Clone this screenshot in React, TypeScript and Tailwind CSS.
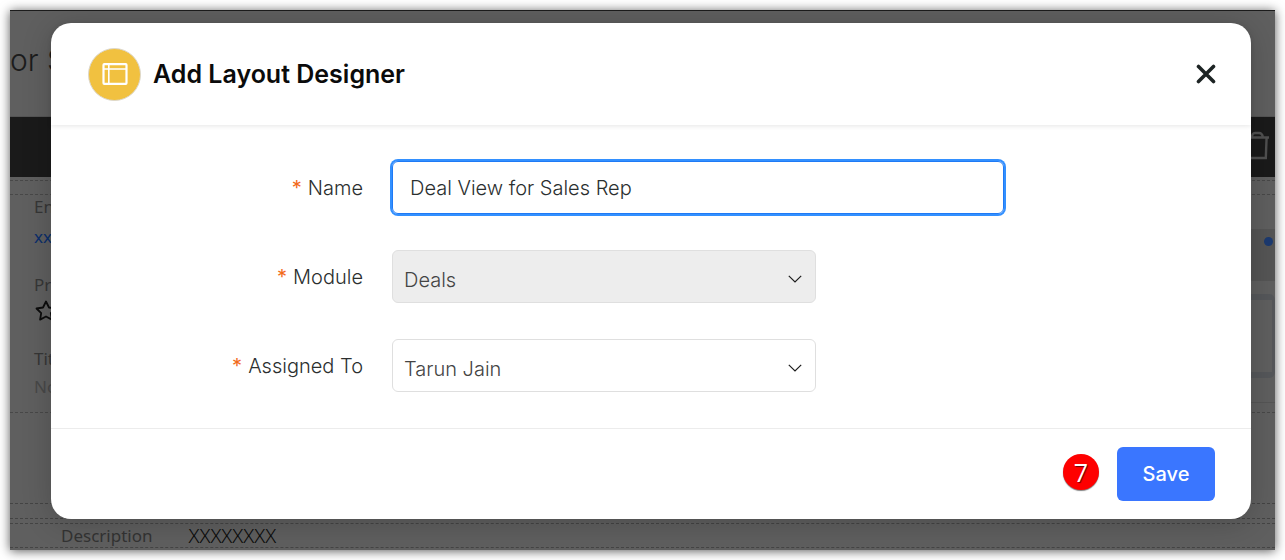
import React from 'react';

const assignees = ['Tarun Jain'];
const modules = ['Deals'];

const Chevron = () => (
  <svg
    viewBox="0 0 14 8"
    className="pointer-events-none col-start-1 row-start-1 mt-1 mr-[14px] h-2 w-[14px] self-center justify-self-end"
    fill="none"
    stroke="#1c1c1c"
    strokeWidth="1.2"
    aria-hidden="true"
  >
    <path d="M0.8 0.8 7 7 13.2 0.8" />
  </svg>
);

const FieldLabel = ({ htmlFor, children }: { htmlFor: string; children: React.ReactNode }) => (
  <label htmlFor={htmlFor} className="text-right text-[20px] leading-6 font-light text-[#2b2f2f]">
    <span className="mr-1.5 font-normal text-[#f26a1b]">*</span>
    {children}
  </label>
);

const SelectField = ({
  id,
  options,
  disabled,
}: {
  id: string;
  options: string[];
  disabled?: boolean;
}) => (
  <div className="grid w-full max-w-[424px]">
    <select
      id={id}
      disabled={disabled}
      className="col-start-1 row-start-1 h-[53px] w-full appearance-none rounded-md border border-[#dfdfdf] bg-white pt-1.5 pr-10 pl-[11px] text-[20px] font-light text-[#444] disabled:bg-[#ededed] disabled:opacity-100"
    >
      {options.map((option) => (
        <option key={option}>{option}</option>
      ))}
    </select>
    <Chevron />
  </div>
);

// Record page dimmed behind the dialog
const RecordPage = () => (
  <div
    aria-hidden="true"
    className="col-start-1 row-start-1 flex min-w-0 flex-col overflow-hidden border-t border-[#1c1c1c] bg-[#5f5f5f] font-['Noto_Sans','Open_Sans',sans-serif] text-[17px] leading-6"
  >
    <div className="flex h-[106px] items-center border-b border-[#545454] pb-2 font-['Inter',sans-serif] text-[30px] font-light text-[#1c1c1c]">
      or S
    </div>
    <div className="flex h-[60px] items-center justify-end bg-[#1a1a1a] pr-1.5 pb-1">
      <svg viewBox="0 0 26 30" className="h-[30px] w-[26px]" fill="none" stroke="#505050" strokeWidth="2.4">
        <path d="M0 7.500h26M3 7.500l.8 20.500h19L23.600 7.500M9 7.500c0-3 1-4.500 3-4.500h4c2 0 3.500 1.500 4 4.500" />
      </svg>
    </div>
    <div className="mt-[3px] h-[14px] border-t border-dashed border-[#484848]" />
    <div className="flex h-[219px] justify-between border-y border-dashed border-[#484848]">
      <div className="flex flex-col pl-6 text-[#363636]">
        <span>En</span>
        <span className="mt-1.5 text-[#0b2e6b]">xx</span>
        <span className="mt-6">Pr</span>
        <svg viewBox="0 0 24 24" className="mt-0.5 h-6 w-6" fill="none" stroke="#0c0c0c" strokeWidth="1.800" strokeLinejoin="round">
          <path d="m12 2.500 3 6 6.500 1-4.700 4.600 1.100 6.500L12 17.500l-5.900 3.100 1.100-6.500L2.500 9.500l6.500-1z" />
        </svg>
        <span className="mt-6">Tit</span>
        <span className="mt-1 text-[#484848]">No</span>
      </div>
      <div className="flex w-[100px] flex-col pt-[34px]">
        <div className="flex h-[52px] items-start justify-end bg-[#555] pt-2 pr-0.5">
          <span className="h-[9px] w-[9px] rounded-full bg-[#1c3a70]" />
        </div>
        <div className="mt-[13px] h-[84px] rounded-md border-[6px] border-r-[3px] border-[#55575a]" />
        <div className="mt-6 border-t border-[#555]" />
      </div>
    </div>
    <div className="mt-[90px] h-4 border-y border-dashed border-[#444]" />
    <div className="mt-1 flex h-[25px] items-center gap-9 border-y border-dashed border-[#444] pl-[51px]">
      <span className="text-[#333]">Description</span>
      <span className="text-[20px] font-light text-[#0a0a0a]">XXXXXXXX</span>
    </div>
    <div className="h-px" />
  </div>
);

const LayoutDesignerDialog = () => (
  <form
    role="dialog"
    aria-labelledby="dialog-title"
    onSubmit={(e) => e.preventDefault()}
    className="flex flex-col rounded-[20px] bg-white shadow-[0_4px_30px_rgba(0,0,0,0.2)]"
  >
    <header className="flex h-[102px] items-center gap-3 rounded-t-[20px] pr-[35px] pl-[37px] shadow-[0_1px_5px_rgba(0,0,0,0.1)]">
      <span className="flex h-[53px] w-[53px] items-center justify-center rounded-full border border-[#dcd8ce] bg-[#f1c140]">
        <svg viewBox="0 0 26 22" className="h-[22px] w-[26px]" fill="none" stroke="#fff" aria-hidden="true">
          <rect x="1.500" y="1.200" width="23" height="19.600" rx="0.800" strokeWidth="2.200" />
          <path d="M1.500 6h23M6.800 1.500v19" strokeWidth="1.600" />
        </svg>
      </span>
      <h1 id="dialog-title" className="flex-1 text-[25px] leading-8 font-semibold text-[#0b0b0b]">
        Add Layout Designer
      </h1>
      <button type="button" aria-label="Close">
        <svg viewBox="0 0 20 20" className="h-5 w-5" stroke="#1d2424" strokeWidth="3.600" strokeLinecap="round">
          <path d="m2.500 2.500 15 15m0-15-15 15" />
        </svg>
      </button>
    </header>

    <div className="grid grid-cols-[26%_51%] items-center gap-x-[29px] gap-y-9 py-9">
      <FieldLabel htmlFor="name">Name</FieldLabel>
      <input
        id="name"
        type="text"
        defaultValue="Deal View for Sales Rep"
        className="h-[53px] w-full rounded-md border border-[#1f7af5] px-[17px] text-[20px] font-light text-[#2b2f2f] ring-2 ring-[#3390ff] outline-none"
      />
      <FieldLabel htmlFor="module">Module</FieldLabel>
      <SelectField id="module" options={modules} disabled />
      <FieldLabel htmlFor="assigned-to">Assigned To</FieldLabel>
      <SelectField id="assigned-to" options={assignees} />
    </div>

    <footer className="flex items-center justify-end gap-[18px] border-t border-[#ececec] px-9 py-[18px]">
      <span className="mb-1 flex h-9 w-9 items-center justify-center rounded-full bg-[#fe0000] font-['Open_Sans',sans-serif] text-[25px] leading-6 font-medium text-white shadow-[0_1px_1px_rgba(0,0,0,0.5)] [text-shadow:1px_1px_1px_rgba(0,0,0,0.6)]">
        7
      </span>
      <button
        type="submit"
        className="h-[54px] w-[98px] rounded-md bg-[#3a76ff] text-[20px] font-medium text-white"
      >
        Save
      </button>
    </footer>
  </form>
);

const App = () => (
  <div className="bg-white p-[10px] font-['Inter',sans-serif]">
    <div className="grid grid-cols-1 shadow-[0_1px_10px_rgba(0,0,0,0.65)]">
      <RecordPage />
      <div className="z-10 col-start-1 row-start-1 overflow-hidden pt-[13px] pr-6 pb-[31px] pl-[41px]">
        <LayoutDesignerDialog />
      </div>
    </div>
  </div>
);

export default App;
